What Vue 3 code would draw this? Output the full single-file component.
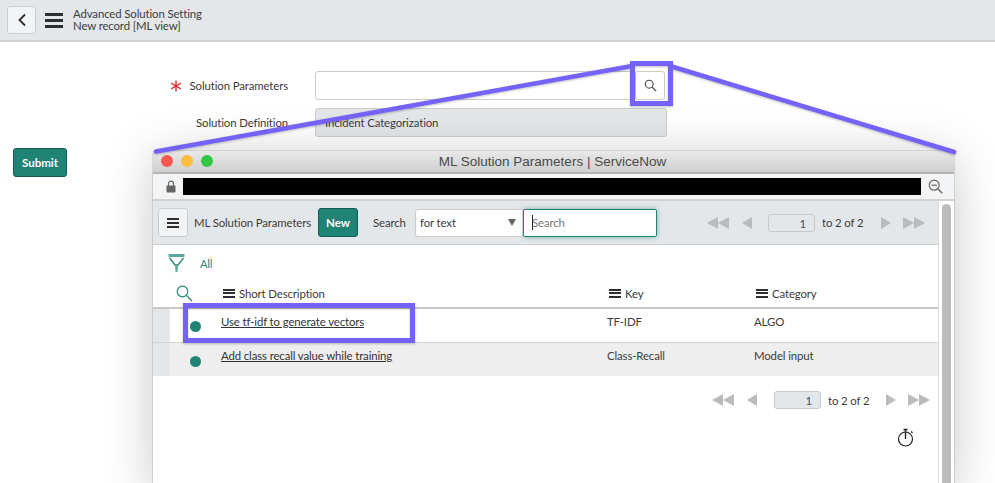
<script setup>
const rows = [
  { name: 'Use tf-idf to generate vectors', key: 'TF-IDF', category: 'ALGO' },
  { name: 'Add class recall value while training', key: 'Class-Recall', category: 'Model input' }
]
const columns = ['Short Description', 'Key', 'Category']
</script>

<template>
  <div class="page">
    <header class="topbar">
      <button class="back-btn">
        <svg width="10" height="14" viewBox="0 0 10 14"><path d="M8 1.500 2.500 7 8 12.500" fill="none" stroke="#2e2e2e" stroke-width="1.800" /></svg>
      </button>
      <div class="burger big"><i></i><i></i><i></i></div>
      <div class="titles">
        <div>Advanced Solution Setting</div>
        <div>New record [ML view]</div>
      </div>
    </header>

    <main class="form">
      <div class="field">
        <div class="label">
          <span class="star">
            <svg width="12" height="12" viewBox="0 0 12 12"><path d="M6 .5v11M1.200 3.200l9.600 5.600M10.800 3.200 1.200 8.800" stroke="#d9383a" stroke-width="1.500" /></svg>
          </span>
          Solution Parameters
        </div>
        <div class="input"></div>
        <button class="search-btn">
          <svg width="13" height="13" viewBox="0 0 13 13"><circle cx="5.200" cy="5.200" r="3.900" fill="none" stroke="#444" stroke-width="1.100" /><path d="m8.100 8.100 4 4" stroke="#444" stroke-width="1.300" /></svg>
        </button>
      </div>
      <div class="field">
        <div class="label">Solution Definition</div>
        <div class="input readonly">Incident Categorization</div>
      </div>
    </main>

    <button class="submit">Submit</button>

    <section class="window">
      <div class="win-title">
        <div class="lights"><i class="red"></i><i class="amber"></i><i class="green"></i></div>
        <span>ML Solution Parameters | ServiceNow</span>
      </div>
      <div class="win-address">
        <svg width="10" height="13" viewBox="0 0 10 13"><path d="M2.500 6V3.600a2.500 2.500 0 0 1 5 0V6" fill="none" stroke="#666" stroke-width="1.200" /><rect x=".5" y="5.500" width="9" height="7" rx="1" fill="#666" /></svg>
        <div class="redacted"></div>
        <svg width="15" height="15" viewBox="0 0 15 15"><circle cx="6.200" cy="6.200" r="5" fill="none" stroke="#666" stroke-width="1.200" /><path d="M3.600 6.200h5.200" stroke="#666" stroke-width="1.200" /><path d="m9.800 9.800 4.400 4.400" stroke="#666" stroke-width="1.500" /></svg>
      </div>

      <div class="win-body">
        <div class="content">
          <div class="toolbar">
            <button class="menu-btn"><div class="burger"><i></i><i></i><i></i></div></button>
            <span class="list-name">ML Solution Parameters</span>
            <button class="new-btn">New</button>
            <span class="search-label">Search</span>
            <div class="select">for text<b></b></div>
            <div class="search-input"><u></u>Search</div>
            <div class="pager top">
              <span class="tri left"></span><span class="tri left"></span>
              <span class="tri left gap-prev"></span>
              <span class="page-no">1</span>
              <span class="page-text">to 2 of 2</span>
              <span class="tri right gap-next"></span>
              <span class="tri right gap-last"></span><span class="tri right"></span>
            </div>
          </div>

          <div class="filter">
            <svg width="17" height="19" viewBox="0 0 17 19"><path d="M.5 1.500h16" stroke="#5aa99c" stroke-width="3" /><path d="M1.500 4l5.500 7h3l5.500-7" fill="none" stroke="#2a8a7b" stroke-width="1.400" /><path d="M7 11h3l-.4 6.500-2 1z" fill="#5aa99c" /></svg>
            <span>All</span>
          </div>

          <div class="grid-head">
            <svg class="head-search" width="17" height="17" viewBox="0 0 17 17"><circle cx="6.500" cy="6.500" r="5.300" fill="none" stroke="#2a8a7b" stroke-width="1.200" /><path d="m10.400 10.400 5.600 5.600" stroke="#2a8a7b" stroke-width="1.300" /></svg>
            <div v-for="c in columns" :key="c" class="head-cell">
              <div class="burger small"><i></i><i></i><i></i></div>{{ c }}
            </div>
          </div>

          <div v-for="(r, i) in rows" :key="r.key" class="row" :class="{ odd: i === 1 }">
            <div class="gutter"></div>
            <div class="dot-cell"><span class="dot"></span></div>
            <a class="name">{{ r.name }}</a>
            <div>{{ r.key }}</div>
            <div>{{ r.category }}</div>
          </div>

          <div class="pager bottom">
            <span class="tri left"></span><span class="tri left"></span>
            <span class="tri left gap-prev"></span>
            <span class="page-no">1</span>
            <span class="page-text">to 2 of 2</span>
            <span class="tri right gap-next"></span>
            <span class="tri right gap-last"></span><span class="tri right"></span>
          </div>

          <div class="timer">
            <svg width="18" height="20" viewBox="0 0 18 20"><circle cx="8.500" cy="11" r="7" fill="none" stroke="#222" stroke-width="1.200" /><path d="M8.500 1.500V11" stroke="#222" stroke-width="1.400" /><path d="M6.500 1.500h4M14 3.600l1.600 1.200" stroke="#222" stroke-width="1.300" /></svg>
          </div>
        </div>
        <div class="scrollbar"><div class="thumb"></div></div>
      </div>
    </section>

    <!-- purple callouts drawn over the screenshot -->
    <svg class="callouts" width="995" height="483" viewBox="0 0 995 483">
      <path d="M156 151.500 632 66M670 66l284 86" stroke="#7562fb" stroke-width="4.500" stroke-linecap="round" fill="none" />
      <rect x="632.500" y="63.500" width="38" height="40" stroke="#7562fb" stroke-width="5" fill="none" />
      <rect x="185.500" y="305.500" width="227" height="35" stroke="#7562fb" stroke-width="5" fill="none" />
    </svg>
  </div>
</template>

<style>
html, body { margin: 0; overflow: hidden; background: #fff; }
</style>

<style scoped>
.page {
  position: relative;
  width: 995px;
  height: 483px;
  overflow: hidden;
  background: #fff;
  font-family: Lato, "Noto Sans", sans-serif;
  font-size: 11.400px;
  letter-spacing: -0.12px;
  color: #3c3c3c;
}
button { font-family: inherit; padding: 0; }

.topbar {
  display: flex;
  align-items: center;
  height: 40px;
  padding-left: 7px;
  background: #e4e7ea;
  border-bottom: 2px solid #cfcfcf;
}
.back-btn {
  display: flex;
  align-items: center;
  justify-content: center;
  width: 29px;
  height: 28px;
  margin-right: 9px;
  background: #f2f3f4;
  border: 1px solid #cbced1;
  border-radius: 3px;
}
.titles { margin-left: 10px; line-height: 12px; }

.burger { display: flex; flex-direction: column; gap: 2px; width: 12px; }
.burger i { display: block; height: 2px; background: #2e2e2e; }
.burger.big { width: 18px; gap: 3px; }
.burger.big i { height: 3px; }
.burger.small { flex: none; margin-right: 4px; gap: 1.500px; }

.form { padding-top: 29px; }
.field { display: flex; align-items: center; height: 29px; margin-bottom: 8px; }
.label { display: flex; justify-content: flex-end; align-items: center; width: 288px; margin-right: 27px; }
.star { margin-right: 8px; height: 12px; }
.input {
  box-sizing: border-box;
  width: 317px;
  height: 29px;
  background: #fff;
  border: 1px solid #cbcbcb;
  border-radius: 3px 0 0 3px;
}
.input.readonly {
  width: 352px;
  padding: 7px 0 0 9px;
  background: #e4e7ea;
  border-radius: 3px;
}
.search-btn {
  display: flex;
  align-items: center;
  justify-content: center;
  width: 30px;
  height: 29px;
  margin-left: 3px;
  background: #fff;
  border: 1px solid #cbcbcb;
  border-radius: 3px;
}
.submit {
  display: block;
  width: 54px;
  height: 29px;
  margin: 11px 0 0 13px;
  background: #1f8476;
  border: 1px solid #135e53;
  border-radius: 3px;
  color: #fff;
  font-size: 11.500px;
  font-weight: 700;
}

.window {
  position: absolute;
  left: 153px;
  top: 151px;
  width: 801px;
  height: 340px;
  background: #fff;
  box-shadow: 0 0 0 1px rgba(0, 0, 0, 0.1), 0 6px 50px rgba(0, 0, 0, 0.22);
  border-radius: 4px 4px 0 0;
}
.win-title {
  position: relative;
  display: flex;
  justify-content: center;
  align-items: center;
  height: 21px;
  padding-right: 2px;
  background: linear-gradient(#e9e9e9, #cfcfcf);
  border-bottom: 2px solid #b4b4b4;
  border-radius: 4px 4px 0 0;
  font-family: "Liberation Sans", Arial, sans-serif;
  font-size: 13.500px;
  letter-spacing: 0;
  color: #4a4a4a;
}
.lights { position: absolute; left: 8px; top: 4px; display: flex; gap: 8px; }
.lights i { width: 12px; height: 12px; border-radius: 50%; }
.red { background: #fc5753; }
.amber { background: #fdbc40; }
.green { background: #33c748; }

.win-address {
  display: flex;
  align-items: center;
  height: 27px;
  padding: 0 11px 0 13px;
  background: #f3f4f6;
  border-bottom: 2px solid #d2d2d2;
  box-sizing: border-box;
}
.redacted { width: 738px; height: 17px; margin: 0 7px; background: #000; }

.win-body { display: flex; }
.content { width: 785px; }
.scrollbar { width: 15px; border-left: 1px solid #dcdcdc; padding: 3px 0 0 3px; box-sizing: border-box; }
.thumb { width: 9px; height: 300px; background: #bcbcbc; border-radius: 5px 5px 0 0; }

.toolbar {
  display: flex;
  align-items: center;
  height: 43px;
  padding-left: 5px;
  background: #e4e7ea;
  border-bottom: 1px solid #cfcfcf;
}
.menu-btn {
  display: flex;
  align-items: center;
  justify-content: center;
  width: 30px;
  height: 29px;
  background: #f2f3f4;
  border: 1px solid #cbced1;
  border-radius: 3px;
}
.list-name { margin-left: 6px; width: 124px; white-space: nowrap; }
.new-btn {
  width: 40px;
  height: 29px;
  background: #1f8476;
  border: 1px solid #135e53;
  border-radius: 3px;
  color: #fff;
  font-size: 11.500px;
  font-weight: 700;
}
.search-label { margin-left: 15px; width: 42px; }
.select {
  position: relative;
  box-sizing: border-box;
  width: 108px;
  height: 28px;
  padding: 6px 0 0 4px;
  background: #fff;
  border: 1px solid #cbcbcb;
  border-radius: 3px 0 0 3px;
}
.select b {
  position: absolute;
  right: 6px;
  top: 9px;
  border: 4.500px solid transparent;
  border-top: 7px solid #666;
  border-bottom: 0;
}
.search-input {
  display: flex;
  align-items: center;
  box-sizing: border-box;
  width: 134px;
  height: 28px;
  padding-left: 8px;
  background: #fff;
  border: 1px solid #1f8476;
  border-radius: 2px;
  box-shadow: 0 0 5px rgba(31, 132, 118, 0.6);
  color: #777;
}
.search-input u { width: 1px; height: 15px; margin-right: -1px; background: #222; }

.pager { display: flex; align-items: center; }
.pager.top { margin-left: 50px; }
.pager.bottom { justify-content: flex-end; padding: 15px 8px 0 0; height: 18px; }
.tri { width: 0; height: 0; border-style: solid; border-color: transparent; border-width: 6px 0; }
.tri.left { border-right: 11px solid #b9bcbf; }
.tri.right { border-left: 11px solid #b9bcbf; }
.gap-prev { margin-left: 13px; border-right-width: 10px !important; }
.gap-next { margin-left: 17px; border-left-width: 10px !important; }
.gap-last { margin-left: 12px; }
.page-no {
  box-sizing: border-box;
  width: 47px;
  height: 18px;
  margin-left: 17px;
  padding-right: 8px;
  line-height: 17px;
  text-align: right;
  background: #e4e7ea;
  border: 1px solid #c8cbce;
  border-radius: 3px;
  color: #44525f;
}
.pager.top .page-no { margin-left: 16px; }
.pager.top .gap-next { margin-left: 18px; }
.page-text { margin-left: 7px; width: 41px; white-space: nowrap; }

.filter { display: flex; align-items: center; height: 37px; padding-left: 15px; color: #1f8476; font-size: 11px; }
.filter span { margin-left: 15px; }

.grid-head {
  display: grid;
  grid-template-columns: 70px 386px 147px 1fr;
  align-items: center;
  height: 25px;
  border-bottom: 2px solid #c8c8c8;
}
.head-search { margin-left: 23px; margin-top: -3px; }
.head-cell { display: flex; align-items: center; margin-top: -3px; }

.row {
  display: grid;
  grid-template-columns: 17px 51px 386px 147px 1fr;
  height: 33px;
  line-height: 26px;
  border-bottom: 1px solid #d4d4d4;
}
.row.odd { background: #eee; border-bottom: 0; }
.gutter { background: #e4e7ea; }
.dot-cell { display: flex; align-items: flex-end; padding: 0 0 10px 20px; }
.odd .dot-cell { padding-bottom: 9px; }
.dot { width: 11px; height: 11px; border-radius: 50%; background: #1f8476; }
.name { text-decoration: underline; color: #333; }

.timer { display: flex; justify-content: flex-end; padding: 19px 23px 0 0; }

.callouts {
  position: absolute;
  left: 0;
  top: 0;
  pointer-events: none;
  filter: drop-shadow(0 1px 1px rgba(0, 0, 0, 0.25));
}
</style>
